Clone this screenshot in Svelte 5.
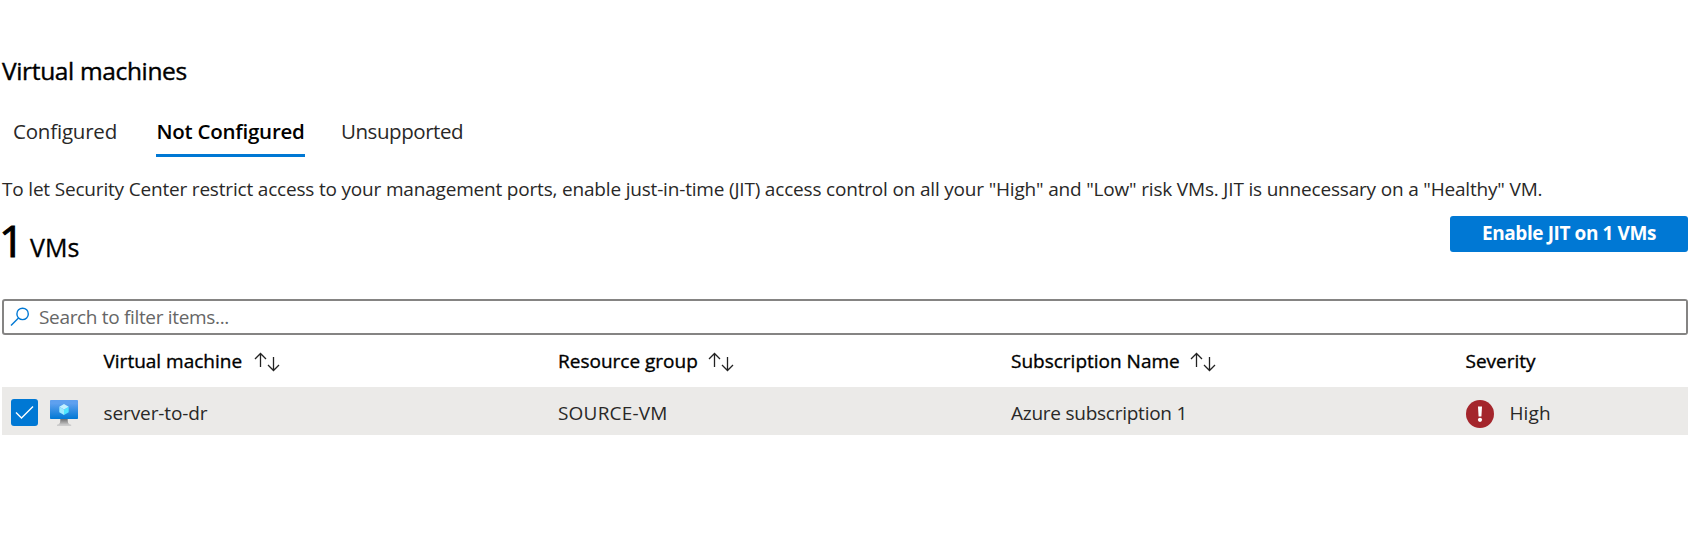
<script>
  const tabs = [
    { label: 'Configured', key: 'configured' },
    { label: 'Not Configured', key: 'not-configured' },
    { label: 'Unsupported', key: 'unsupported' }
  ];
  let active = $state('not-configured');
  let checked = $state(true);
</script>

{#snippet sort()}
  <svg class="sort" width="26" height="20" viewBox="0 0 26 20" fill="none" stroke="#222" stroke-width="1.3">
    <path d="M6.5 15V1.5M1 7L6.5 1.5L12 7" />
    <path d="M19.5 5V18.5M14 13L19.5 18.5L25 13" />
  </svg>
{/snippet}

<main>
  <h1>Virtual machines</h1>

  <nav>
    {#each tabs as tab}
      <button class="tab {tab.key}" class:active={active === tab.key} onclick={() => (active = tab.key)}>
        {tab.label}
      </button>
    {/each}
  </nav>

  <p class="description">To let Security Center restrict access to your management ports, enable just-in-time (JIT) access control on all your "High" and "Low" risk VMs. JIT is unnecessary on a "Healthy" VM.</p>

  <section class="summary">
    <div class="count"><span class="number">1</span><span class="unit">VMs</span></div>
    <button class="primary"><span>Enable JIT on 1 VMs</span></button>
  </section>

  <label class="search">
    <svg width="20" height="20" viewBox="0 0 20 20" fill="none" stroke="#0078d4" stroke-width="1.4">
      <circle cx="12.6" cy="6.9" r="5.7" />
      <path d="M8.5 11L1 18.5" />
    </svg>
    <input type="text" placeholder="Search to filter items..." />
  </label>

  <div class="grid header">
    <div></div>
    <div class="cell"><span>Virtual machine</span>{@render sort()}</div>
    <div class="cell tight"><span>Resource group</span>{@render sort()}</div>
    <div class="cell tight"><span>Subscription Name</span>{@render sort()}</div>
    <div class="cell"><span>Severity</span></div>
  </div>

  <div class="grid row">
    <div class="lead">
      <button class="check" aria-label="Select server-to-dr" onclick={() => (checked = !checked)}>
        {#if checked}
          <svg width="27" height="27" viewBox="0 0 27 27" fill="none" stroke="#fff" stroke-width="1.4">
            <path d="M5 13.5L10.5 19L22 7.5" />
          </svg>
        {/if}
      </button>
      <svg class="vm" width="28" height="28" viewBox="0 0 28 28">
        <defs>
          <linearGradient id="screen" x1="0" y1="1" x2="0" y2="0">
            <stop offset="0" stop-color="#0078d4" />
            <stop offset=".82" stop-color="#5ea0ef" />
          </linearGradient>
          <linearGradient id="stand" x1="0" y1="1" x2="0" y2="0">
            <stop offset=".15" stop-color="#ccc" />
            <stop offset="1" stop-color="#707070" />
          </linearGradient>
        </defs>
        <path fill="url(#stand)" d="M10.3 20h7.4c0 4 .6 5.3 3.5 5.8v1.2H7v-1.2c2.8-.5 3.3-1.8 3.3-5.8z" />
        <rect y="1" width="28" height="19" rx=".8" fill="url(#screen)" />
        <path fill="#50e6ff" d="M18.7 7.8v5.5L14 16V10.5z" />
        <path fill="#c3f1ff" d="M18.7 7.8L14 10.5 9.3 7.8 14 5z" />
        <path fill="#9cebff" d="M14 10.5V16l-4.7-2.7V7.8z" />
      </svg>
    </div>
    <div class="cell"><span class="name">server-to-dr</span></div>
    <div class="cell"><span class="group">SOURCE-VM</span></div>
    <div class="cell"><span class="subscription">Azure subscription 1</span></div>
    <div class="cell severity">
      <svg width="28" height="28" viewBox="0 0 28 28">
        <circle cx="14" cy="14" r="14" fill="#a4262c" />
        <path d="M12 6.5h4l-.6 10h-2.8z" fill="#fff" />
        <circle cx="14" cy="19.8" r="2.1" fill="#fff" />
      </svg>
      <span class="level">High</span>
    </div>
  </div>
</main>

<style>
  :global(body) {
    margin: 0;
    background: #fff;
  }
  main {
    box-sizing: border-box;
    height: 549px;
    padding: 52px 14px 0 2px;
    font-family: 'Open Sans', 'Noto Sans', sans-serif;
    font-size: 19px;
    color: #292827;
    white-space: nowrap;
    overflow: hidden;
  }
  button {
    font: inherit;
    color: inherit;
    border: 0;
    padding: 0;
    background: none;
  }
  h1 {
    margin: 0;
    height: 38px;
    line-height: 38px;
    font-size: 24.5px;
    font-weight: 400;
    color: #000;
    letter-spacing: -0.35px;
    -webkit-text-stroke: 0.4px #000;
  }
  nav {
    display: flex;
    height: 67px;
    padding-left: 11px;
  }
  .tab {
    box-sizing: border-box;
    display: flex;
    align-items: flex-start;
    height: 67px;
    padding-top: 23px;
    line-height: 36px;
    font-size: 20.5px;
    letter-spacing: -0.45px;
  }
  .tab.configured { width: 143px; letter-spacing: -0.2px; }
  .tab.not-configured { width: 149px; margin-right: 36px; }
  .tab.active {
    justify-content: center;
    border-bottom: 3px solid #0078d4;
    color: #000;
    font-weight: 600;
    letter-spacing: -0.23px;
  }
  .description {
    margin: 0;
    padding-top: 16px;
    height: 43px;
    line-height: 32px;
    letter-spacing: -0.185px;
  }
  .summary {
    display: flex;
    justify-content: space-between;
    align-items: flex-start;
    height: 83px;
  }
  .count {
    display: flex;
    align-items: baseline;
    line-height: 48px;
    color: #000;
  }
  .number {
    width: 28px;
    font-size: 44px;
    text-indent: -3px;
    -webkit-text-stroke: 1px #000;
  }
  .unit {
    font-size: 25px;
    letter-spacing: 0.1px;
    -webkit-text-stroke: 0.3px #000;
  }
  .primary {
    width: 238px;
    height: 36px;
    line-height: 34px;
    padding-bottom: 2px;
    border-radius: 3px;
    background: #0078d4;
    color: #fff;
    font-weight: 700;
    letter-spacing: -0.4px;
  }
  .search {
    box-sizing: border-box;
    display: flex;
    align-items: center;
    height: 36px;
    padding-left: 6px;
    border: 2px solid #858483;
    border-radius: 3px;
  }
  .search input {
    flex: 1;
    margin-left: 9px;
    padding: 0;
    border: 0;
    outline: 0;
    font: inherit;
    line-height: 32px;
    letter-spacing: -0.33px;
  }
  .search input::placeholder { color: #666; opacity: 1; }
  .grid {
    display: grid;
    grid-template-columns: 101.5px 454.5px 453px 454.5px 1fr;
    align-items: center;
  }
  .header {
    height: 52px;
    color: #000;
    -webkit-text-stroke: 0.35px #000;
  }
  .row {
    height: 48px;
    background: #ebeae8;
  }
  .cell {
    display: flex;
    align-items: center;
  }
  .row .cell { padding-top: 3px; }
  .name { letter-spacing: -0.1px; }
  .group { letter-spacing: 0.2px; }
  .subscription { letter-spacing: -0.25px; }
  .level { letter-spacing: 0.1px; }
  .sort { margin: 2px 0 0 12px; }
  .tight .sort { margin-left: 10.5px; }
  .lead {
    display: flex;
    align-items: center;
    padding: 2px 0 0 9px;
  }
  .check {
    width: 27px;
    height: 27px;
    border-radius: 3px;
    background: #0078d4;
  }
  .check svg { display: block; }
  .vm { margin: 2px 0 0 12px; }
  .severity svg { margin: 2px 16px 0 0; }
</style>
